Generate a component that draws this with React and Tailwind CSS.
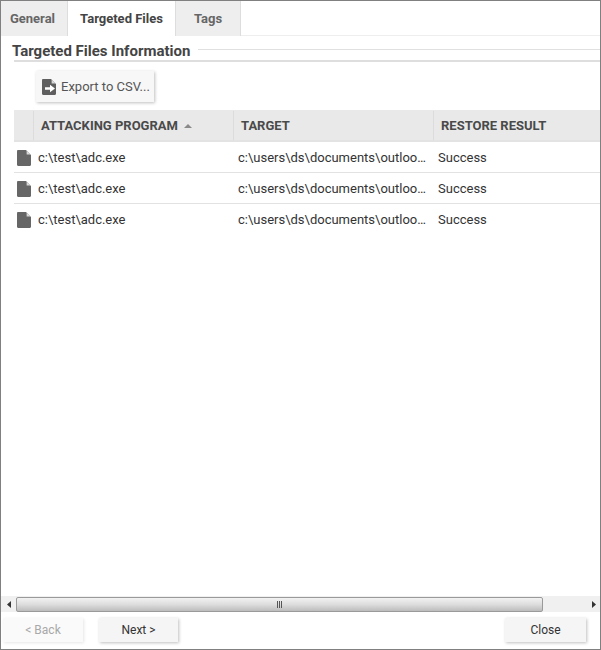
import React from "react";

const rows = [1, 2, 3];

const FileIcon = () => (
  <svg width="14" height="16" viewBox="0 0 14 16" className="block">
    <path d="M0 1.2C0 .5.5 0 1.2 0H9l5 5v9.8c0 .7-.5 1.2-1.2 1.2H1.2C.5 16 0 15.5 0 14.8z" fill="#666666" />
    <path d="M9.6 0.4L13.6 4.4H9.6z" fill="#d8d8d8" />
  </svg>
);

const ExportIcon = () => (
  <svg width="14" height="16" viewBox="0 0 14 16" className="block">
    <path d="M0 1.2C0 .5.5 0 1.2 0H9l5 5v9.8c0 .7-.5 1.2-1.2 1.2H1.2C.5 16 0 15.5 0 14.8z" fill="#5f5f5f" />
    <path d="M9.6 0.4L13.6 4.4H9.6z" fill="#d8d8d8" />
    <path d="M3 8.2h5V5.8l5 3.7-5 3.7v-2.4H3z" fill="#ffffff" />
  </svg>
);

const FooterButton = ({ children, className }) => (
  <button className={`h-[24px] pt-[1px] text-[12px] ${className}`}>{children}</button>
);

const App = () => {
  return (
    <div className="w-[601px] h-[650px] flex flex-col bg-white border border-[#808080] font-['Roboto',sans-serif] text-[#333333] overflow-hidden">
      {/* Tabs */}
      <div className="h-[35px] shrink-0 flex border-b border-[#eeeeee] text-[13px] font-bold">
        <div className="w-[67px] h-[35px] pr-[3px] bg-[#eeeeee] border-r border-[#dddddd] flex items-center justify-center text-[#666666]">
          General
        </div>
        <div className="w-[108px] h-[35px] bg-white border-r border-[#dddddd] flex items-center justify-center text-[#444444]">
          Targeted Files
        </div>
        <div className="w-[65px] h-[35px] bg-[#eeeeee] border-r border-[#dddddd] flex items-center justify-center text-[#666666]">
          Tags
        </div>
      </div>

      {/* Section heading */}
      <div className="ml-[11px] mt-[4px] h-[20px] shrink-0 flex items-center">
        <span className="pt-[2px] text-[15px] font-bold text-[#444444] leading-[20px] whitespace-nowrap">
          Targeted Files Information
        </span>
        <div className="ml-[8px] mb-[2px] flex-1 border-t border-[#e0e0e0]"></div>
      </div>
      <div className="ml-[13px] h-[2px] shrink-0 bg-[#dedede]"></div>

      {/* Toolbar */}
      <div className="ml-[35px] mt-[9px] shrink-0">
        <button className="w-[118px] h-[31px] flex items-center gap-[5px] pl-[6px] bg-[#f7f7f7] text-[13px] text-[#555555] shadow-[1px_1px_3px_rgba(0,0,0,0.25)]">
          <ExportIcon />
          Export to CSV...
        </button>
      </div>

      {/* Table */}
      <div className="ml-[13px] mt-[8px] flex-1 min-h-0">
        <div className="h-[32px] pt-[1px] flex bg-[#e9e9e9] border-b-2 border-[#e3e3e3] text-[13px] font-bold text-[#4a4a4a]">
          <div className="w-[20px] border-r border-[#dcdcdc]"></div>
          <div className="w-[200px] border-r border-[#dcdcdc] flex items-center pl-[7px] gap-[6px]">
            ATTACKING PROGRAM
            <svg width="8" height="4" viewBox="0 0 8 4" className="block">
              <path d="M0 4L4 0l4 4z" fill="#8a8a8a" />
            </svg>
          </div>
          <div className="w-[200px] border-r border-[#dcdcdc] flex items-center pl-[7px]">TARGET</div>
          <div className="flex-1 flex items-center pl-[7px]">RESTORE RESULT</div>
        </div>
        {rows.map((row) => (
          <div key={row} className="h-[31px] pt-[1px] flex items-center border-b border-[#e2e2e2] last:border-transparent text-[13px] text-[#333333]">
            <div className="w-[24px] pl-[3px]">
              <FileIcon />
            </div>
            <div className="w-[200px]">c:\test\adc.exe</div>
            <div className="w-[200px] whitespace-nowrap">c:\users\ds\documents\outloo…</div>
            <div className="flex-1">Success</div>
          </div>
        ))}
      </div>

      {/* Horizontal scrollbar */}
      <div className="h-[16px] shrink-0 flex items-center bg-[#f0f0f0]">
        <div className="w-[15px] flex justify-center">
          <svg width="4" height="7" viewBox="0 0 4 7" className="block">
            <path d="M4 0v7L0 3.5z" fill="#333333" />
          </svg>
        </div>
        <div className="w-[527px] h-[15px] flex items-center justify-center rounded-[2px] border border-[#9a9a9a] bg-gradient-to-b from-[#f2f2f2] via-[#dddddd] to-[#bcbcbc]">
          <div className="flex gap-[1px]">
            <div className="w-[1px] h-[7px] bg-[#555555]"></div>
            <div className="w-[1px] h-[7px] bg-[#555555]"></div>
            <div className="w-[1px] h-[7px] bg-[#555555]"></div>
          </div>
        </div>
        <div className="flex-1 flex justify-end pr-[4px]">
          <svg width="4" height="7" viewBox="0 0 4 7" className="block">
            <path d="M0 0v7l4-3.5z" fill="#333333" />
          </svg>
        </div>
      </div>

      {/* Footer buttons */}
      <div className="h-[37px] pb-[2px] shrink-0 flex items-center">
        <FooterButton className="ml-[2px] w-[80px] text-[#a8a8a8] bg-[#fafafa] shadow-[1px_1px_3px_rgba(0,0,0,0.1)]">
          &lt; Back
        </FooterButton>
        <FooterButton className="ml-[16px] w-[79px] text-[#333333] bg-[#f5f5f5] shadow-[1px_1px_3px_rgba(0,0,0,0.25)]">
          Next &gt;
        </FooterButton>
        <FooterButton className="ml-auto mr-[14px] w-[81px] text-[#333333] bg-[#f5f5f5] shadow-[1px_1px_3px_rgba(0,0,0,0.25)]">
          Close
        </FooterButton>
      </div>
    </div>
  );
};

export default App;
